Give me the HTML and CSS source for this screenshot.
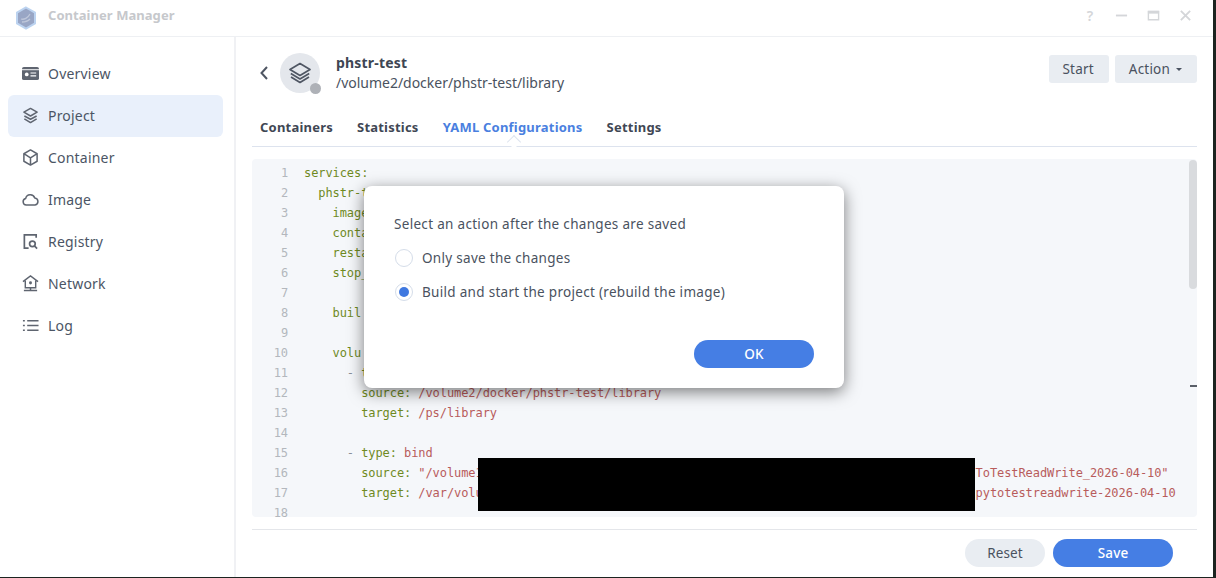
FILE: index.html
```html
<!DOCTYPE html>
<html lang="en">
<head>
<meta charset="utf-8">
<title>Container Manager</title>
<link rel="stylesheet" href="styles.css">
</head>
<body>
<div class="window">
  <header class="titlebar">
    <svg class="logo" viewBox="0 0 22 24"><path d="M11 1.500l9 5.200v10.600L11 22.500l-9-5.200V6.700z" fill="#99a6c5" stroke="#bcd3f0" stroke-width="2"/><path d="M6 13c3 1 7-1 9-5M7 16c3 0 6-1 8-3" fill="none" stroke="#bfc7da" stroke-width="1.300"/></svg>
    <span class="app-name">Container Manager</span>
    <div class="win-controls">
      <span class="help">?</span>
      <svg class="win-icon" viewBox="0 0 14 14"><path d="M1 7h12" stroke="#d4d6d9" stroke-width="2"/></svg>
      <svg class="win-icon" viewBox="0 0 14 14"><path d="M1.500 2.500h11v9h-11z" fill="none" stroke="#d4d6d9" stroke-width="1.500"/><path d="M1 3.500h12" stroke="#d4d6d9" stroke-width="3"/></svg>
      <svg class="win-icon" viewBox="0 0 14 14"><path d="M2 2l10 10M12 2L2 12" stroke="#d4d6d9" stroke-width="2"/></svg>
    </div>
  </header>
  <div class="body">
    <nav class="sidebar">
      <a class="nav-item"><svg class="nav-icon" viewBox="0 0 18 16"><rect x="0" y="1" width="18" height="14" rx="2" fill="#5f6570"/><rect x="0" y="3.500" width="18" height="1" fill="#fff"/><circle cx="5" cy="9" r="2" fill="#fff"/><path d="M9 7.500h6M9 10.500h6" stroke="#fff" stroke-width="1.200"/></svg>Overview</a>
      <a class="nav-item active"><svg class="nav-icon" viewBox="0 0 18 18"><path d="M9 1.500l7 4-7 4-7-4z M2.500 9.500L9 13l6.500-3.500M2.500 12.500L9 16.500l6.500-4" fill="none" stroke="#5f6570" stroke-width="1.600" stroke-linejoin="round"/></svg>Project</a>
      <a class="nav-item"><svg class="nav-icon" viewBox="0 0 18 18"><path d="M9 1l7 4v8l-7 4-7-4V5z M2 5l7 4.500L16 5M9 9.500V17" fill="none" stroke="#5f6570" stroke-width="1.600" stroke-linejoin="round"/></svg>Container</a>
      <a class="nav-item"><svg class="nav-icon" viewBox="0 0 18 14"><path d="M4.500 12.800a3.500 3.500 0 0 1-.6-6.900 5 5 0 0 1 9.600-.6 3.800 3.800 0 0 1 .3 7.500z" fill="none" stroke="#5f6570" stroke-width="1.600"/></svg>Image</a>
      <a class="nav-item"><svg class="nav-icon" viewBox="0 0 18 18"><path d="M15 5V2H2.500v14H7M10 2h5" fill="none" stroke="#5f6570" stroke-width="1.800"/><circle cx="11" cy="11.500" r="3" fill="none" stroke="#5f6570" stroke-width="1.800"/><path d="M13.200 13.700l2.800 2.800" stroke="#5f6570" stroke-width="1.800"/></svg>Registry</a>
      <a class="nav-item"><svg class="nav-icon" viewBox="0 0 18 18"><path d="M1 7l8-6 8 6M3.500 6v7.500h11V6" fill="none" stroke="#5f6570" stroke-width="1.500"/><rect x="7.500" y="6.500" width="3" height="3.500" rx="1.500" fill="#5f6570"/><path d="M9 13v3M2 16.500h14" stroke="#5f6570" stroke-width="1.600"/></svg>Network</a>
      <a class="nav-item"><svg class="nav-icon" viewBox="0 0 18 14"><path d="M1 2h2M5.500 2h12M1 7h2M5.500 7h12M1 12h2M5.500 12h12" stroke="#5f6570" stroke-width="1.700"/></svg>Log</a>
    </nav>
    <main class="content">
      <section class="project-head">
        <svg class="back" viewBox="0 0 10 16"><path d="M8 2L2.500 8 8 14" fill="none" stroke="#4e5562" stroke-width="2"/></svg>
        <div class="avatar">
          <svg class="avatar-icon" viewBox="0 0 24 24"><path d="M12 2.500l10 6-10 6-10-6z M2.800 12.500L12 18l9.200-5.500M3 16l9 5.500 9-5.500" fill="none" stroke="#4f5663" stroke-width="1.700" stroke-linejoin="round"/></svg>
          <span class="status-dot"></span>
        </div>
        <div class="project-title">
          <div class="project-name">phstr-test</div>
          <div class="project-path">/volume2/docker/phstr-test/library</div>
        </div>
        <div class="head-actions">
          <button class="btn-flat">Start</button>
          <button class="btn-flat">Action<span class="caret"></span></button>
        </div>
      </section>
      <div class="tabs">
        <span class="tab">Containers</span>
        <span class="tab">Statistics</span>
        <span class="tab tab-active">YAML Configurations</span>
        <span class="tab">Settings</span>
      </div>
      <div class="editor">
        <pre class="gutter">1
2
3
4
5
6
7
8
9
10
11
12
13
14
15
16
17
18</pre>
        <pre class="code"><span class="k">services:</span>
<span class="k">  phstr-t</span>
<span class="k">    image</span>
<span class="k">    conta</span>
<span class="k">    resta</span>
<span class="k">    stop_</span>

<span class="k">    buil</span>

<span class="k">    volu</span>
<span class="d">      - </span><span class="k">t</span>
<span class="k">        source: </span><span class="v">/volume2/docker/phstr-test/library</span>
<span class="k">        target: </span><span class="v">/ps/library</span>

<span class="d">      - </span><span class="k">type: </span><span class="v">bind</span>
<span class="k">        source: </span><span class="v">"/volume1                                                                     ToTestReadWrite_2026-04-10"</span>
<span class="k">        target: </span><span class="v">/var/volu                                                                     pytotestreadwrite-2026-04-10</span></pre>
        <div class="scroll-thumb"></div>
        <div class="scroll-mark"></div>
        <div class="redaction"></div>
      </div>
      <footer class="footer">
        <button class="btn-pill btn-grey">Reset</button>
        <button class="btn-pill btn-blue">Save</button>
      </footer>
    </main>
  </div>
  <div class="dialog">
    <p class="dialog-title">Select an action after the changes are saved</p>
    <label class="radio-row"><span class="radio"></span>Only save the changes</label>
    <label class="radio-row"><span class="radio radio-on"></span>Build and start the project (rebuild the image)</label>
    <div class="dialog-foot"><button class="btn-pill btn-blue">OK</button></div>
  </div>
</div>
</body>
</html>
```
FILE: styles.css
```css
* { box-sizing: border-box; }
html, body { margin: 0; height: 100%; background: #1c2420; overflow: hidden; }
body { font-family: "Noto Sans", sans-serif; font-size: 14px; color: #4a5260; }
button { font-family: inherit; border: 0; cursor: pointer; }

.window { position: relative; width: 1213px; height: 577px; background: #fff; display: flex; flex-direction: column; overflow: hidden; }

.titlebar { height: 37px; flex: none; display: flex; align-items: center; padding-left: 15px; border-bottom: 1px solid #eef0f3; }
.logo { width: 22px; height: 24px; margin-right: 11px; margin-top: -1px; }
.app-name { font-size: 13px; font-weight: 700; color: #c6c8cc; letter-spacing: .05px; margin-top: -6px; }
.win-controls { margin-left: auto; display: flex; align-items: center; gap: 19px; padding-right: 21px; margin-top: -6px; }
.help { font-size: 14px; font-weight: 600; color: #d4d6d9; width: 12px; text-align: center; }
.win-icon { width: 13px; height: 13px; }

.body { flex: 1; display: flex; min-height: 0; }
.sidebar { width: 236px; flex: none; border-right: 2px solid #f0f1f4; padding: 16px 11px 0 8px; display: flex; flex-direction: column; }
.nav-item { height: 42px; display: flex; align-items: center; gap: 9px; padding: 0 0 2px 14px; border-radius: 6px; font-size: 14px; letter-spacing: .2px; color: #4b5565; }
.nav-item.active { background: #e9f0fb; }
.nav-icon { width: 17px; height: 17px; flex: none; }

.content { flex: 1; min-width: 0; padding: 0 16px; display: flex; flex-direction: column; }
.project-head { height: 73px; flex: none; display: flex; align-items: center; padding-bottom: 2px; }
.back { width: 10px; height: 16px; margin: 1px 10px 0 7px; }
.avatar { position: relative; width: 40px; height: 40px; margin-left: 1px; border-radius: 50%; background: #e4e7ec; display: flex; align-items: center; justify-content: center; margin-right: 16px; }
.avatar-icon { width: 24px; height: 24px; }
.status-dot { position: absolute; right: -1px; bottom: -1px; width: 11px; height: 11px; border-radius: 50%; background: #aeb1b7; }
.project-name { font-size: 14px; font-weight: 700; color: #3e4653; line-height: 20px; letter-spacing: .2px; padding-top: 1px; }
.project-path { font-size: 14px; color: #4a5260; line-height: 20px; letter-spacing: -.02px; }
.head-actions { margin-left: auto; display: flex; gap: 6px; margin-top: -7px; }
.btn-flat { height: 28px; padding: 0 15px 0 14px; background: #e9edf2; border-radius: 3px; font-size: 13.500px; letter-spacing: .2px; color: #4a5260; display: flex; align-items: center; }
.caret { width: 0; height: 0; margin-left: 6px; border: 3.500px solid transparent; border-top: 3.500px solid #4a5260; border-bottom: 0; }

.tabs { height: 37px; flex: none; display: flex; gap: 24px; padding: 7px 8px 0; align-items: flex-start; border-bottom: 1px solid #dde3ee; }
.tab { position: relative; font-size: 13px; font-weight: 700; color: #3f4754; line-height: 20px; letter-spacing: .22px; }
.tab-active { color: #4a7fe0; }
.tab-active::after { content: ""; position: absolute; left: 50%; bottom: -10px; width: 9px; height: 9px; margin-left: -4px; background: #fff; border-left: 1px solid #dde3ee; border-top: 1px solid #dde3ee; transform: rotate(45deg); }

.editor { position: relative; margin-top: 12px; height: 358px; flex: none; background: #f5f7fa; border-radius: 4px; overflow: hidden; display: flex; padding-top: 4px; }
.gutter, .code { margin: 0; font-family: "DejaVu Sans Mono", monospace; font-size: 12px; line-height: 20px; }
.gutter { width: 36px; text-align: right; color: #b3b7bd; flex: none; letter-spacing: -.1px; }
.code { margin-left: 16px; letter-spacing: -.08px; color: #7a8a1e; white-space: pre; }
.k { color: #6f8a1f; }
.d { color: #8a8f98; }
.v { color: #b85c5c; }
.scroll-thumb { position: absolute; right: 0; top: 1px; width: 8px; height: 129px; border-radius: 4px; background: #d9dbde; }
.scroll-mark { position: absolute; right: 0; top: 226px; width: 7px; height: 2px; background: #5a5f68; }
.redaction { position: absolute; left: 226px; top: 299px; width: 497px; height: 53px; background: #000; }

.footer { margin-top: 12px; flex: 1; border-top: 1px solid #e4e6ea; display: flex; justify-content: flex-end; gap: 8px; padding: 9px 24px 0 0; }
.btn-pill { height: 28px; border-radius: 14px; font-size: 13.500px; letter-spacing: .15px; }
.btn-grey { width: 80px; background: #e9edf2; color: #4a5260; }
.btn-blue { width: 120px; background: #457ee4; color: #fff; font-weight: 500; }

.dialog { position: absolute; left: 364px; top: 186px; width: 480px; height: 202px; background: #fff; border-radius: 8px; box-shadow: 0 4px 16px rgba(0, 0, 0, .5); padding: 28px 30px 0; display: flex; flex-direction: column; }
.dialog-title { margin: 0 0 7px; font-size: 13.500px; line-height: 20px; letter-spacing: .31px; color: #4a5260; }
.radio-row { display: flex; align-items: center; gap: 9px; height: 34px; padding-left: 1px; font-size: 13.500px; letter-spacing: .3px; color: #4a5260; }
.radio { width: 18px; height: 18px; border-radius: 50%; border: 1px solid #d5dde9; background: #fff; position: relative; }
.radio-on::after { content: ""; position: absolute; left: 3px; top: 3px; width: 10px; height: 10px; border-radius: 50%; background: #3f78e0; }
.dialog-foot { margin-top: auto; display: flex; justify-content: flex-end; padding: 0 0 20px; }
```
